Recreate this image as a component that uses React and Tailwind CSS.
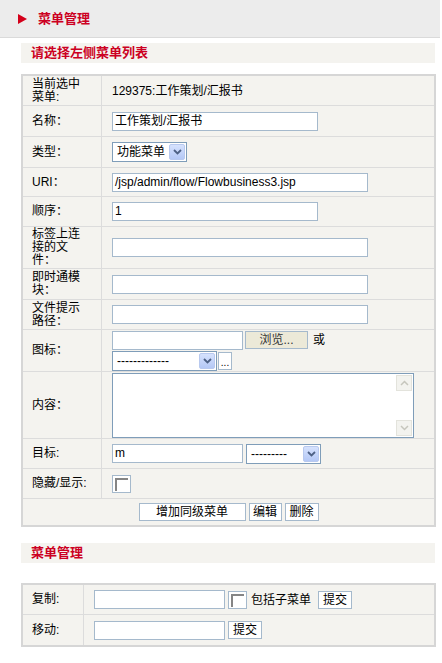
import React from "react"

const font = { fontFamily: '"Liberation Sans", "Noto Sans CJK SC", sans-serif' }

const Input = ({ w, value = "" }) => (
  <div className={`${w} h-[19px] border border-[#a5b9cc] bg-white px-[2px] text-[12px] leading-[17px] text-black overflow-hidden whitespace-nowrap`}>
    {value}
  </div>
)

const Arrow = () => (
  <svg width="9" height="6" viewBox="0 0 9 6">
    <path d="M1 1 L4.5 4.5 L8 1" fill="none" stroke="#4d6185" strokeWidth="1.8" />
  </svg>
)

const Select = ({ w, text }) => (
  <div className={`${w} h-[20px] border border-[#7f9db9] bg-white flex items-center justify-between p-[1px]`}>
    <span className="pl-[3px] text-[12px] leading-[16px] text-black whitespace-nowrap">{text}</span>
    <span className="w-[16px] h-full flex items-center justify-center bg-gradient-to-b from-[#d6e2fd] to-[#b4c8f6] border border-[#b8c9ef] rounded-[2px]">
      <Arrow />
    </span>
  </div>
)

const Btn = ({ w, children, bg = "bg-white" }) => (
  <div className={`${w} h-[18px] border border-[#a5b9cc] ${bg} flex items-center justify-center text-[12px] leading-[16px] text-black whitespace-nowrap`}>
    {children}
  </div>
)

const Check = () => (
  <span className="w-[19px] h-[18px] border border-[#a5b9cc] bg-white flex items-start justify-start p-[2px]">
    <span className="w-[13px] h-[13px] border-t-2 border-l-2 border-[#858585] bg-white" />
  </span>
)

const Row = ({ label, h, lw = "w-[79px]", children, last }) => (
  <div className={`flex ${h} ${last ? "" : "border-b border-[#dcdcdc]"}`}>
    <div className={`${lw} shrink-0 border-r border-[#dcdcdc] pl-[9px] flex items-center text-[12px] leading-[13px] text-black`}>
      {label}
    </div>
    <div className="flex-1 pl-[10px] flex items-center">{children}</div>
  </div>
)

const SectionBar = ({ title }) => (
  <div className="w-[414px] h-[20px] bg-[#f4f3ef] pl-[10px] flex items-center text-[13px] font-bold text-[#cc0022]">
    {title}
  </div>
)

export default function App() {
  return (
    <div className="w-[442px] h-[663px] bg-white" style={font}>
      <div className="w-[440px] h-[38px] bg-[#ececec] border-b border-[#dadada] flex items-center pl-[18px]">
        <svg width="9" height="10" viewBox="0 0 9 10">
          <polygon points="0,0 9,5 0,10" fill="#d4001a" />
        </svg>
        <span className="ml-[11px] text-[13px] font-bold text-[#cc0022]">菜单管理</span>
      </div>

      <div className="pl-[21px] pt-[5px]">
        <SectionBar title="请选择左侧菜单列表" />

        <div className="mt-[11px] w-[415px] border-2 border-[#d6d6d6] bg-[#f4f3ef]">
          <Row label={<span>当前选中<br />菜单:</span>} h="h-[30px]">
            <span className="text-[12px] text-black">129375:工作策划/汇报书</span>
          </Row>
          <Row label="名称：" h="h-[31px]">
            <Input w="w-[206px]" value="工作策划/汇报书" />
          </Row>
          <Row label="类型：" h="h-[31px]">
            <Select w="w-[75px]" text="功能菜单" />
          </Row>
          <Row label="URI：" h="h-[29px]">
            <Input w="w-[256px]" value="/jsp/admin/flow/Flowbusiness3.jsp" />
          </Row>
          <Row label="顺序：" h="h-[30px]">
            <Input w="w-[206px]" value="1" />
          </Row>
          <Row label={<span>标签上连<br />接的文<br />件：</span>} h="h-[42px]">
            <Input w="w-[256px]" />
          </Row>
          <Row label={<span>即时通模<br />块：</span>} h="h-[31px]">
            <Input w="w-[256px]" />
          </Row>
          <Row label={<span>文件提示<br />路径：</span>} h="h-[30px]">
            <Input w="w-[256px]" />
          </Row>
          <Row label="图标：" h="h-[42px]">
            <div className="flex flex-col gap-[1px]">
              <div className="flex items-center gap-[2px]">
                <Input w="w-[131px]" />
                <Btn w="w-[63px]" bg="bg-[#ece9d8]">
                  <span className="text-[#333]">浏览...</span>
                </Btn>
                <span className="ml-[3px] text-[12px]">或</span>
              </div>
              <div className="flex items-center gap-[1px]">
                <Select w="w-[105px]" text="-------------" />
                <div className="w-[14px] h-[18px] border border-[#a5b9cc] bg-white text-[10px] leading-[20px] text-center">...</div>
              </div>
            </div>
          </Row>
          <Row label="内容：" h="h-[67px]">
            <div className="w-[302px] h-[65px] border border-[#7f9db9] bg-white flex justify-end">
              <div className="w-[17px] h-full flex flex-col justify-between py-[1px] pr-[1px]">
                <div className="h-[16px] bg-[#f3f3ef] border border-[#e3e3dc] flex items-center justify-center">
                  <svg width="9" height="6" viewBox="0 0 9 6"><path d="M1 5 L4.5 1.5 L8 5" fill="none" stroke="#c6c6bd" strokeWidth="1.5" /></svg>
                </div>
                <div className="h-[16px] bg-[#f3f3ef] border border-[#e3e3dc] flex items-center justify-center">
                  <svg width="9" height="6" viewBox="0 0 9 6"><path d="M1 1 L4.5 4.5 L8 1" fill="none" stroke="#c6c6bd" strokeWidth="1.5" /></svg>
                </div>
              </div>
            </div>
          </Row>
          <Row label="目标:" h="h-[30px]">
            <div className="flex items-center gap-[3px]">
              <Input w="w-[131px]" value="m" />
              <Select w="w-[75px]" text="---------" />
            </div>
          </Row>
          <Row label="隐藏/显示:" h="h-[30px]">
            <Check />
          </Row>
          <div className="h-[26px] flex items-center justify-center gap-[3px]">
            <Btn w="w-[107px]">增加同级菜单</Btn>
            <Btn w="w-[33px]">编辑</Btn>
            <Btn w="w-[34px]">删除</Btn>
          </div>
        </div>

        <div className="mt-[16px]">
          <SectionBar title="菜单管理" />
        </div>

        <div className="mt-[20px] w-[415px] border-2 border-[#d6d6d6] bg-[#f4f3ef]">
          <Row label="复制:" h="h-[30px]" lw="w-[61px]">
            <div className="flex items-center">
              <Input w="w-[131px]" />
              <span className="ml-[3px]"><Check /></span>
              <span className="ml-[4px] text-[12px]">包括子菜单</span>
              <span className="ml-[7px]"><Btn w="w-[34px]">提交</Btn></span>
            </div>
          </Row>
          <Row label="移动:" h="h-[30px]" lw="w-[61px]" last>
            <div className="flex items-center gap-[3px]">
              <Input w="w-[131px]" />
              <Btn w="w-[34px]">提交</Btn>
            </div>
          </Row>
        </div>
      </div>
    </div>
  )
}
